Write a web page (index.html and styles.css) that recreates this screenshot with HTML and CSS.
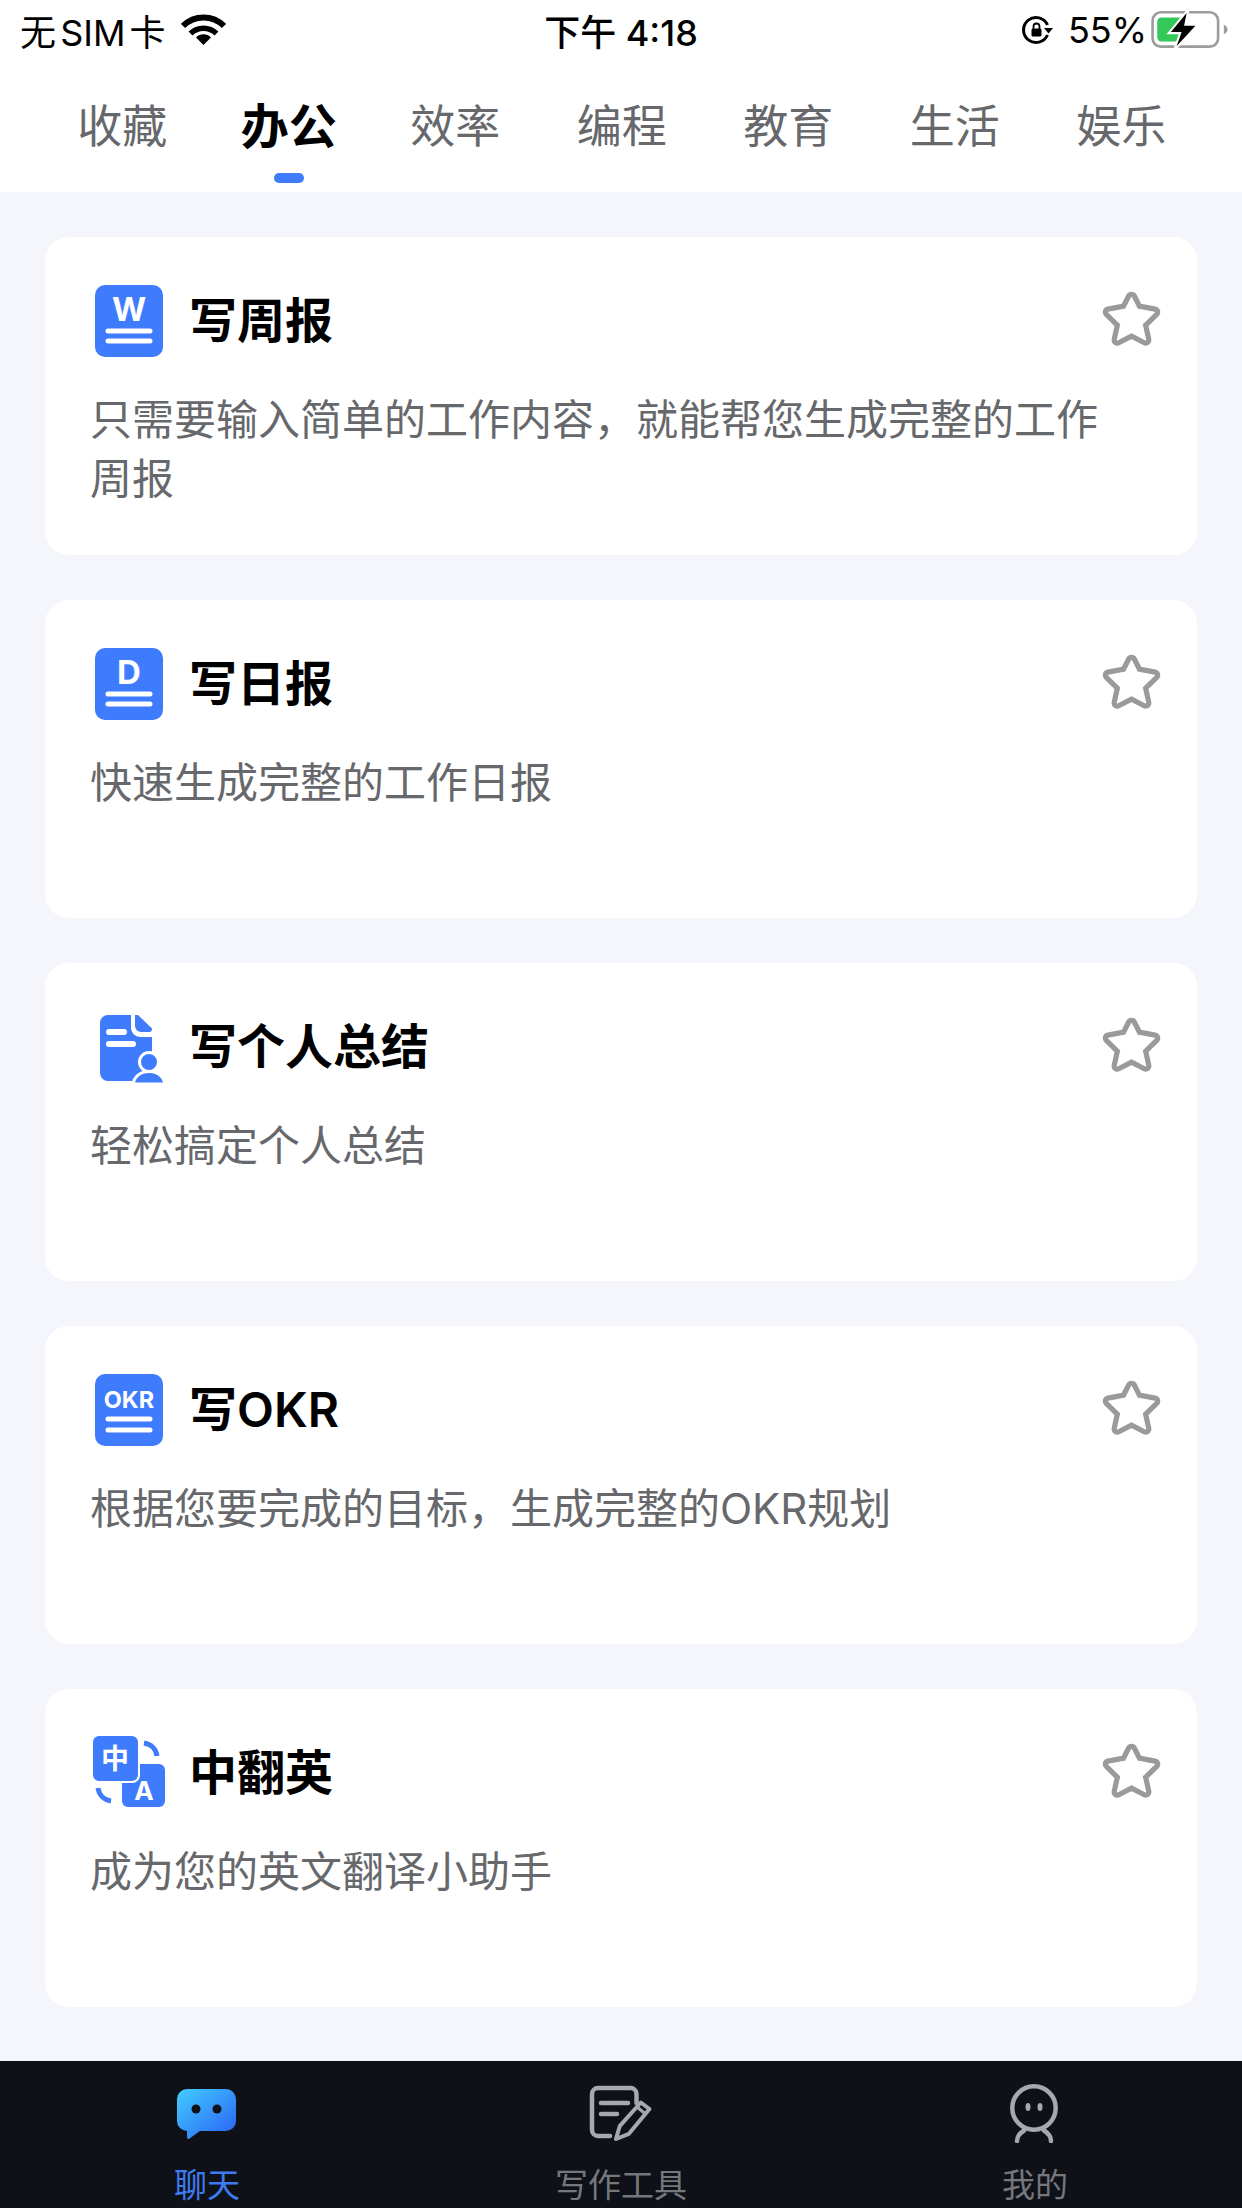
FILE: index.html
```html
<!DOCTYPE html>
<html lang="zh-CN">
<head>
    <meta charset="UTF-8">
    <meta name="viewport" content="width=device-width, initial-scale=1.0">
    <title>写作工具</title>
    <link rel="stylesheet" href="styles.css">
</head>
<body>
    <div class="page">
        <header class="status-bar">
            <div class="status-left">
                <span class="carrier">无 SIM 卡</span>
                <svg class="wifi" viewBox="0 0 45 32">
                    <path d="M22.500 31 15 23.500a10.500 10.500 0 0 1 15 0Z" fill="#000"/>
                    <path d="M9.500 19.500a18.500 18.500 0 0 1 26 0" fill="none" stroke="#000" stroke-width="5.500"/>
                    <path d="M2 12a29 29 0 0 1 41 0" fill="none" stroke="#000" stroke-width="6"/>
                </svg>
            </div>
            <span class="clock">下午 4:18</span>
            <div class="status-right">
                <svg class="rotation-lock" viewBox="0 0 32 32">
                    <path d="M26.500 21A12.500 12.500 0 1 1 26.500 11" fill="none" stroke="#000" stroke-width="3"/>
                    <path d="M23 14h9l-4.500 5.500Z" fill="#000"/>
                    <rect x="10.500" y="14.500" width="10" height="8" rx="1.500" fill="#000"/>
                    <path d="M12.500 15v-2.500a3 3 0 0 1 6 0V15" fill="none" stroke="#000" stroke-width="1.800"/>
                </svg>
                <span class="battery-text">55%</span>
                <svg class="battery" viewBox="0 0 74 40">
                    <rect x="1.500" y="3" width="63" height="33" rx="8" fill="none" stroke="#9c9c9c" stroke-width="2.500"/>
                    <path d="M6 12a4 4 0 0 1 4-4H32V31H10a4 4 0 0 1-4-4Z" fill="#34c759"/>
                    <path d="M70 15c2.500 1 3.500 2.500 3.500 4.500s-1 3.500-3.500 4.500Z" fill="#9c9c9c"/>
                    <path d="M36 0 17 23H28L22 40 45 15H33Z" fill="#000" stroke="#fff" stroke-width="2"/>
                </svg>
            </div>
        </header>

        <nav class="tabs">
            <a class="tab">收藏</a>
            <a class="tab active">办公</a>
            <a class="tab">效率</a>
            <a class="tab">编程</a>
            <a class="tab">教育</a>
            <a class="tab">生活</a>
            <a class="tab">娱乐</a>
        </nav>

        <main class="tool-list">
            <section class="tool-card">
                <div class="tool-head">
                    <svg class="tool-icon" viewBox="0 0 72 72">
                        <rect x="1" width="68" height="72" rx="10" fill="#3f7bfd"/>
                        <text x="35" y="36" class="icon-letter" font-size="33" text-anchor="middle">W</text>
                        <path d="M14 46H56M14 56H56" stroke="#fff" stroke-width="5" stroke-linecap="round"/>
                    </svg>
                    <h2 class="tool-title">写周报</h2>
                    <svg class="star" viewBox="0 0 60 60">
                        <path class="star-edge" d="M30 9 35.600 20 51.900 23 40.200 34.500 43.500 49.500 30 42.500 16.500 49.500 19.800 34.500 8.100 23 24.400 20Z"/>
                        <path class="star-fill" d="M30 9 35.600 20 51.900 23 40.200 34.500 43.500 49.500 30 42.500 16.500 49.500 19.800 34.500 8.100 23 24.400 20Z"/>
                    </svg>
                </div>
                <p class="tool-desc">只需要输入简单的工作内容，就能帮您生成完整的工作周报</p>
            </section>

            <section class="tool-card">
                <div class="tool-head">
                    <svg class="tool-icon" viewBox="0 0 72 72">
                        <rect x="1" width="68" height="72" rx="10" fill="#3f7bfd"/>
                        <text x="35" y="36" class="icon-letter" font-size="33" text-anchor="middle">D</text>
                        <path d="M14 46H56M14 56H56" stroke="#fff" stroke-width="5" stroke-linecap="round"/>
                    </svg>
                    <h2 class="tool-title">写日报</h2>
                    <svg class="star" viewBox="0 0 60 60">
                        <path class="star-edge" d="M30 9 35.600 20 51.900 23 40.200 34.500 43.500 49.500 30 42.500 16.500 49.500 19.800 34.500 8.100 23 24.400 20Z"/>
                        <path class="star-fill" d="M30 9 35.600 20 51.900 23 40.200 34.500 43.500 49.500 30 42.500 16.500 49.500 19.800 34.500 8.100 23 24.400 20Z"/>
                    </svg>
                </div>
                <p class="tool-desc">快速生成完整的工作日报</p>
            </section>

            <section class="tool-card">
                <div class="tool-head">
                    <svg class="tool-icon" viewBox="0 0 72 72">
                        <path d="M14 4H37V17a9 9 0 0 0 9 9H58V62a8 8 0 0 1-8 8H14a8 8 0 0 1-8-8V12a8 8 0 0 1 8-8Z" fill="#3f7bfd"/>
                        <path d="M41 4h3L57 16.500a2.500 2.500 0 0 1-1.500 4.500H47a6 6 0 0 1-6-6Z" fill="#3f7bfd"/>
                        <path d="M15 21H30M15 33H39" stroke="#fff" stroke-width="6" stroke-linecap="round"/>
                        <circle cx="55" cy="51" r="9.500" fill="#3f7bfd" stroke="#fff" stroke-width="3"/>
                        <path d="M39.500 73c0-7 7-12.500 15.500-12.500S70.500 66 70.500 73Z" fill="#3f7bfd" stroke="#fff" stroke-width="3"/>
                    </svg>
                    <h2 class="tool-title">写个人总结</h2>
                    <svg class="star" viewBox="0 0 60 60">
                        <path class="star-edge" d="M30 9 35.600 20 51.900 23 40.200 34.500 43.500 49.500 30 42.500 16.500 49.500 19.800 34.500 8.100 23 24.400 20Z"/>
                        <path class="star-fill" d="M30 9 35.600 20 51.900 23 40.200 34.500 43.500 49.500 30 42.500 16.500 49.500 19.800 34.500 8.100 23 24.400 20Z"/>
                    </svg>
                </div>
                <p class="tool-desc">轻松搞定个人总结</p>
            </section>

            <section class="tool-card">
                <div class="tool-head">
                    <svg class="tool-icon" viewBox="0 0 72 72">
                        <rect x="1" width="68" height="72" rx="10" fill="#3f7bfd"/>
                        <text x="35" y="34" class="icon-letter" font-size="23.500" text-anchor="middle">OKR</text>
                        <path d="M14 45H56M14 56H56" stroke="#fff" stroke-width="5" stroke-linecap="round"/>
                    </svg>
                    <h2 class="tool-title">写OKR</h2>
                    <svg class="star" viewBox="0 0 60 60">
                        <path class="star-edge" d="M30 9 35.600 20 51.900 23 40.200 34.500 43.500 49.500 30 42.500 16.500 49.500 19.800 34.500 8.100 23 24.400 20Z"/>
                        <path class="star-fill" d="M30 9 35.600 20 51.900 23 40.200 34.500 43.500 49.500 30 42.500 16.500 49.500 19.800 34.500 8.100 23 24.400 20Z"/>
                    </svg>
                </div>
                <p class="tool-desc">根据您要完成的目标，生成完整的OKR规划</p>
            </section>

            <section class="tool-card">
                <div class="tool-head">
                    <svg class="tool-icon" viewBox="0 0 72 72">
                        <rect x="28" y="27" width="43" height="43" rx="6" fill="#3f7bfd"/>
                        <rect x="-2" y="-2" width="47" height="47" rx="7" fill="#3f7bfd" stroke="#fff" stroke-width="2"/>
                        <text x="21" y="32" class="icon-letter" font-size="28" text-anchor="middle">中</text>
                        <text x="50" y="63" class="icon-letter" font-size="26" text-anchor="middle">A</text>
                        <path d="M50 6c7 1 12 6 13 13M4 51c1 7 6 12 13 13" fill="none" stroke="#3f7bfd" stroke-width="5"/>
                    </svg>
                    <h2 class="tool-title">中翻英</h2>
                    <svg class="star" viewBox="0 0 60 60">
                        <path class="star-edge" d="M30 9 35.600 20 51.900 23 40.200 34.500 43.500 49.500 30 42.500 16.500 49.500 19.800 34.500 8.100 23 24.400 20Z"/>
                        <path class="star-fill" d="M30 9 35.600 20 51.900 23 40.200 34.500 43.500 49.500 30 42.500 16.500 49.500 19.800 34.500 8.100 23 24.400 20Z"/>
                    </svg>
                </div>
                <p class="tool-desc">成为您的英文翻译小助手</p>
            </section>
        </main>

        <footer class="bottom-nav">
            <a class="nav-item active">
                <svg class="nav-icon" viewBox="0 0 80 60">
                    <defs>
                        <linearGradient id="chat-fill" x1="0" y1="0" x2="1" y2="1">
                            <stop offset="0" stop-color="#42cdff"/>
                            <stop offset="1" stop-color="#2a5ff5"/>
                        </linearGradient>
                    </defs>
                    <path d="M20 6H59a10 10 0 0 1 10 10V38a10 10 0 0 1-10 10H33L22.500 55.500Q20 57 20 54V48a10 10 0 0 1-10-10V16a10 10 0 0 1 10-10Z" fill="url(#chat-fill)"/>
                    <circle cx="29" cy="26" r="4.500" fill="#0e1118"/>
                    <circle cx="50" cy="26" r="4.500" fill="#0e1118"/>
                </svg>
                <span class="nav-label">聊天</span>
            </a>
            <a class="nav-item">
                <svg class="nav-icon" viewBox="0 0 80 60">
                    <path d="M55.500 20V11a6 6 0 0 0-6-6H17a6 6 0 0 0-6 6v36a6 6 0 0 0 6 6h12" fill="none" stroke="#a5a8b0" stroke-width="4.500" stroke-linecap="round"/>
                    <path d="M20 20H47M20 31H36" stroke="#a5a8b0" stroke-width="4.500" stroke-linecap="round"/>
                    <path d="M35 56 38.700 43.200 59.800 19.500 68.500 26 47.900 50.800Z" fill="none" stroke="#a5a8b0" stroke-width="4" stroke-linejoin="round"/>
                    <path d="M56 24 64.500 31" stroke="#a5a8b0" stroke-width="3"/>
                </svg>
                <span class="nav-label">写作工具</span>
            </a>
            <a class="nav-item">
                <svg class="nav-icon" viewBox="0 0 80 60">
                    <circle cx="39" cy="25" r="21.700" fill="none" stroke="#a5a8b0" stroke-width="4.500"/>
                    <ellipse cx="33" cy="24" rx="2.500" ry="4" fill="#a5a8b0"/>
                    <ellipse cx="45" cy="24" rx="2.500" ry="4" fill="#a5a8b0"/>
                    <path d="M22 58C22 53 25 50 29 47.500M56 58C56 53 53 50 49 47.500" fill="none" stroke="#a5a8b0" stroke-width="4.500" stroke-linecap="round"/>
                </svg>
                <span class="nav-label">我的</span>
            </a>
        </footer>
    </div>
</body>
</html>
```

FILE: styles.css
```css
:root {
    --primary: #3f7bfd;
    --background: #f4f6fb;
    --muted: #66686c;
    --nav-bg: #0e1118;
}

body {
    font-family: Inter, "Noto Sans CJK SC", sans-serif;
    margin: 0;
    padding: 0;
    background-color: var(--background);
    color: #000;
}

.page {
    display: flex;
    flex-direction: column;
    height: 2208px;
    overflow: hidden;
}

/* status bar */
.status-bar {
    display: grid;
    grid-template-columns: 1fr auto 1fr;
    align-items: center;
    height: 60px;
    padding: 0 14px;
    background: #fff;
    font-size: 36px;
    box-sizing: border-box;
}

.status-left, .status-right {
    display: flex;
    align-items: center;
}

.status-left {
    padding-left: 6px;
}

.status-right {
    justify-content: flex-end;
}

.carrier {
    word-spacing: -6px;
}

.wifi {
    width: 45px;
    height: 32px;
    margin-left: 15px;
}

.clock {
    font-weight: 500;
}

.rotation-lock {
    width: 32px;
    height: 32px;
    margin-right: 15px;
}

.battery {
    width: 77px;
    height: 42px;
    margin-left: 4px;
}

/* tabs */
.tabs {
    display: grid;
    grid-template-columns: repeat(7, 166.5px);
    align-items: start;
    height: 132px;
    padding: 0 39px;
    background: #fff;
}

.tab {
    display: flex;
    flex-direction: column;
    align-items: center;
    padding-top: 37px;
    font-size: 45px;
    line-height: 60px;
    color: var(--muted);
}

.tab.active {
    color: #000;
    font-size: 48px;
    font-weight: 600;
}

.tab.active::after {
    content: '';
    width: 30px;
    height: 10px;
    margin-top: 16px;
    border-radius: 5px;
    background: var(--primary);
}

/* cards */
.tool-list {
    flex: 1;
    display: flex;
    flex-direction: column;
    gap: 45px;
    padding: 45px 45px 0;
}

.tool-card {
    height: 318px;
    padding: 48px 34px 0 45px;
    background: #fff;
    border-radius: 24px;
    box-sizing: border-box;
}

.tool-head {
    display: flex;
    align-items: center;
    height: 72px;
    padding-left: 4px;
}

.tool-icon {
    width: 72px;
    height: 72px;
    overflow: visible;
    flex-shrink: 0;
}

.icon-letter {
    fill: #fff;
    font-family: Inter, "Noto Sans CJK SC", sans-serif;
    font-weight: 700;
}

.tool-title {
    flex: 1;
    margin: 0 0 0 23px;
    font-size: 48px;
    font-weight: 600;
    line-height: 72px;
}

.star {
    width: 63px;
    height: 63px;
    margin-top: -4px;
    flex-shrink: 0;
}

.star-edge {
    fill: none;
    stroke: #9a9a9a;
    stroke-width: 11;
    stroke-linejoin: round;
}

.star-fill {
    fill: #fff;
    stroke: #fff;
    stroke-width: 1;
    stroke-linejoin: round;
}

.tool-desc {
    margin: 33px 0 0;
    padding-right: 50px;
    font-size: 42px;
    line-height: 59px;
    color: var(--muted);
}

/* bottom nav */
.bottom-nav {
    display: grid;
    grid-template-columns: repeat(3, 1fr);
    height: 147px;
    background: var(--nav-bg);
}

.nav-item {
    display: flex;
    flex-direction: column;
    align-items: center;
    padding-top: 22px;
    color: #75777c;
}

.nav-item.active {
    color: #3f7bf0;
}

.nav-icon {
    width: 80px;
    height: 60px;
}

.nav-label {
    margin-top: 22px;
    font-size: 33px;
    line-height: 40px;
}
```
